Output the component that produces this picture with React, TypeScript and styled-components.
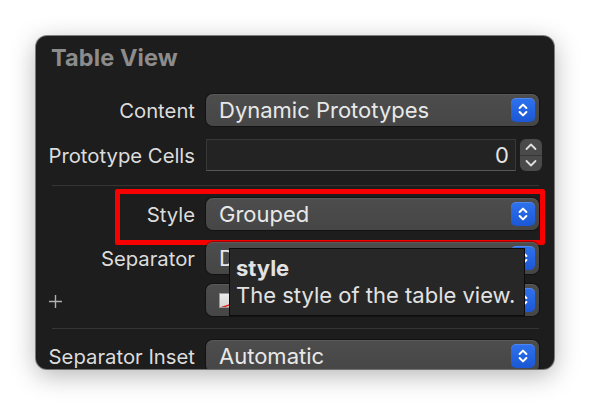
import React from "react";
import styled, { createGlobalStyle } from "styled-components";

const Global = createGlobalStyle`
  html, body { margin: 0; padding: 0; background: #ffffff; }
  body { font-family: Inter, "Noto Sans", "DejaVu Sans", sans-serif; -webkit-font-smoothing: antialiased; }
  * { box-sizing: border-box; }
`;

const Stage = styled.div`
  width: 590px;
  height: 406px;
  padding: 36px 0 0 36px;
`;

const Panel = styled.section`
  position: relative;
  width: 518px;
  height: 333px;
  background: #1d1d1d;
  border-radius: 11px;
  box-shadow: 0 6px 26px rgba(0, 0, 0, 0.3), 0 0 0 1px rgba(0, 0, 0, 0.45);
  overflow: hidden;
  padding: 0 15px 0 12px;
  display: flex;
  flex-direction: column;
`;

const Header = styled.h2`
  margin: 7px 0 0 3px;
  font-size: 23.5px;
  line-height: 30px;
  font-weight: 700;
  color: #8c8c8c;
  letter-spacing: 0.1px;
`;

const Row = styled.div<{ $mt: number }>`
  position: relative;
  display: grid;
  grid-template-columns: 147px 1fr;
  column-gap: 11px;
  align-items: center;
  height: 32px;
  margin-top: ${(p) => p.$mt}px;
  flex-shrink: 0;
`;

const Label = styled.span`
  text-align: right;
  font-size: 20.3px;
  color: #dcdcdc;
  white-space: nowrap;
`;

const Divider = styled.div<{ $mt: number }>`
  height: 1px;
  background: #353535;
  margin: ${(p) => p.$mt}px 0 0 4px;
  flex-shrink: 0;
`;

const Popup = styled.div`
  position: relative;
  height: 32px;
  border-radius: 7px;
  background: linear-gradient(#4d4d4d, #464646);
  box-shadow: inset 0 1px 0 rgba(255, 255, 255, 0.08), 0 0 0 1px rgba(0, 0, 0, 0.35);
  display: flex;
  align-items: center;
  padding: 0 4px 0 13px;
  color: #e8e8e8;
  font-size: 22px;
`;

const PopupText = styled.span`
  flex: 1;
  white-space: nowrap;
  overflow: hidden;
`;

const BlueButton = styled.div`
  width: 24px;
  height: 24px;
  border-radius: 5px;
  background: linear-gradient(#2f72ee, #1b57d4);
  box-shadow: inset 0 1px 0 rgba(255, 255, 255, 0.15);
  display: flex;
  align-items: center;
  justify-content: center;
  flex-shrink: 0;
`;

const FieldWrap = styled.div`
  display: flex;
  align-items: center;
  gap: 4px;
  margin-right: -3px;
`;

const TextField = styled.div`
  flex: 1;
  height: 32px;
  background: #232323;
  border: 1px solid #383838;
  border-bottom-color: #575757;
  display: flex;
  align-items: center;
  justify-content: flex-end;
  padding-right: 6px;
  color: #e4e4e4;
  font-size: 22px;
`;

const Stepper = styled.div`
  width: 22px;
  height: 32px;
  border-radius: 6px;
  background: #4a4a4a;
  display: flex;
  flex-direction: column;
  align-items: center;
  justify-content: space-between;
  padding: 3px 0;
  position: relative;
  &::after {
    content: "";
    position: absolute;
    left: 0;
    right: 0;
    top: 15.5px;
    height: 1px;
    background: #363636;
  }
`;

const PlusCell = styled.div`
  display: flex;
  align-items: center;
  padding: 3px 0 0 0;
`;

const Swatch = styled.div`
  width: 40px;
  height: 15px;
  margin-right: auto;
  background: linear-gradient(#e9e9e9, #d6d6d6);
  border: 1px solid #9a9a9a;
  position: relative;
  overflow: hidden;
`;

const Highlight = styled.div`
  position: absolute;
  left: 67px;
  top: -9px;
  right: -6px;
  bottom: -15px;
  border: 5px solid #f60000;
  border-radius: 2px;
  pointer-events: none;
`;

const Tooltip = styled.div`
  position: absolute;
  left: 193px;
  top: 212px;
  width: 296px;
  height: 68px;
  background: #272727;
  border: 1px solid #0c0c0c;
  padding: 6px 6px;
  color: #e2e2e2;
  font-size: 22px;
  line-height: 27px;
  white-space: nowrap;
`;

const TipTitle = styled.div`
  font-weight: 700;
`;

const Chevrons = ({ color = "#fff" }: { color?: string }) => (
  <svg width="24" height="24" viewBox="0 0 24 24" fill="none">
    <path d="M8.6 10 L12 6.6 L15.4 10" stroke={color} strokeWidth="2" strokeLinecap="round" strokeLinejoin="round" />
    <path d="M8.6 14 L12 17.4 L15.4 14" stroke={color} strokeWidth="2" strokeLinecap="round" strokeLinejoin="round" />
  </svg>
);

const Chevron = ({ up }: { up?: boolean }) => (
  <svg width="14" height="10" viewBox="0 0 14 10" fill="none">
    <path
      d={up ? "M2.5 7 L7 2.5 L11.5 7" : "M2.5 3 L7 7.5 L11.5 3"}
      stroke="#dedede"
      strokeWidth="1.8"
      strokeLinecap="round"
      strokeLinejoin="round"
    />
  </svg>
);

const PopupButton = ({ text }: { text: string }) => (
  <Popup>
    <PopupText>{text}</PopupText>
    <BlueButton>
      <Chevrons />
    </BlueButton>
  </Popup>
);

export default function App() {
  return (
    <>
      <Global />
      <Stage>
        <Panel>
          <Header>Table View</Header>
          <Row $mt={21}>
            <Label>Content</Label>
            <PopupButton text="Dynamic Prototypes" />
          </Row>
          <Row $mt={13}>
            <Label>Prototype Cells</Label>
            <FieldWrap>
              <TextField>0</TextField>
              <Stepper>
                <Chevron up />
                <Chevron />
              </Stepper>
            </FieldWrap>
          </Row>
          <Divider $mt={14} />
          <Row $mt={12}>
            <Label>Style</Label>
            <PopupButton text="Grouped" />
            <Highlight />
          </Row>
          <Row $mt={12}>
            <Label>Separator</Label>
            <PopupButton text="D" />
          </Row>
          <Row $mt={10}>
            <PlusCell>
              <svg width="15" height="15" viewBox="0 0 15 15">
                <path d="M7.5 1 V14 M1 7.5 H14" stroke="#b0b0b0" strokeWidth="1.4" />
              </svg>
            </PlusCell>
            <Popup>
              <Swatch>
                <svg width="40" height="15" viewBox="0 0 40 15" style={{ position: "absolute", left: 0, top: 0 }}>
                  <path d="M0 14 L40 1" stroke="#e01818" strokeWidth="1.4" />
                </svg>
              </Swatch>
              <BlueButton>
                <Chevrons />
              </BlueButton>
            </Popup>
          </Row>
          <Divider $mt={12} />
          <Row $mt={11}>
            <Label>Separator Inset</Label>
            <PopupButton text="Automatic" />
          </Row>
          <Tooltip>
            <TipTitle>style</TipTitle>
            <div>The style of the table view.</div>
          </Tooltip>
        </Panel>
      </Stage>
    </>
  );
}
